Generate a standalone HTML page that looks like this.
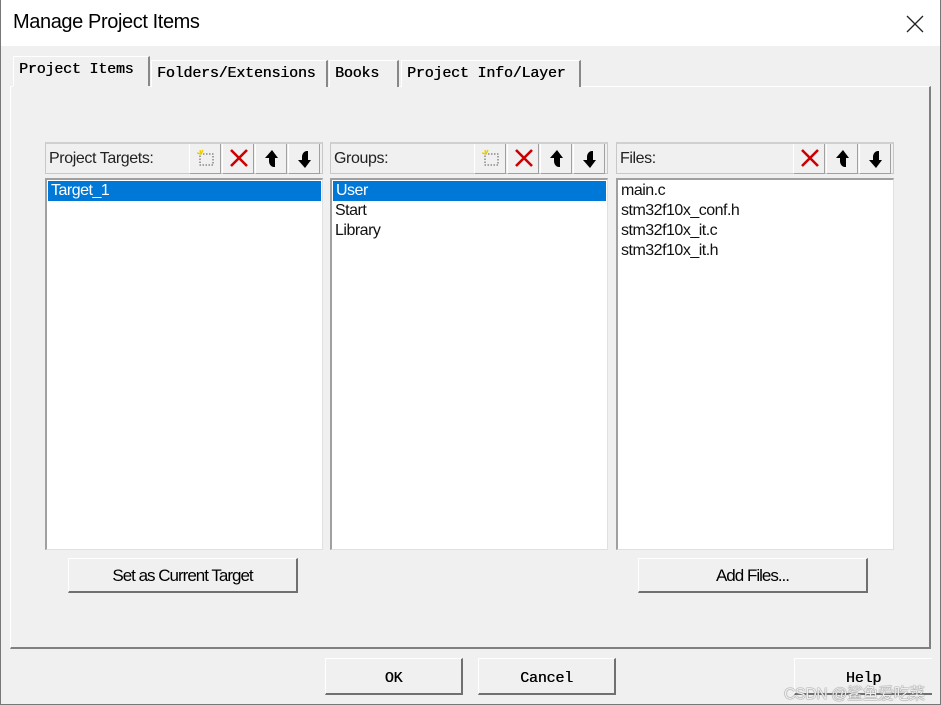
<!DOCTYPE html>
<html><head><style>
*{box-sizing:border-box;margin:0;padding:0}
body{width:941px;height:705px;background:#f0f0f0;position:relative;overflow:hidden;font-family:"Liberation Sans",sans-serif;font-size:15px;color:#000}
.a{position:absolute}
.win{left:0;top:0;width:941px;height:705px;border:1px solid #777;border-top:none}
.title{left:1px;top:0;width:939px;height:46px;background:#fff}
.mono{font-family:"Liberation Mono","DejaVu Sans Mono",monospace;font-weight:normal;font-size:15px;letter-spacing:-0.2px;text-shadow:0.4px 0 0 #000}
.tab{height:27px;border-left:1px solid #fff;border-top:1px solid #fff;border-right:2px solid #888;padding:3px 5px 0;white-space:nowrap;background:#f0f0f0}
.panel{left:10px;top:86px;width:921px;height:563px;border-left:1px solid #fff;border-top:1px solid #fff;border-right:2px solid #808080;border-bottom:2px solid #808080}
.hdr{height:32px;border:1px solid #c8c8c8;border-top:2px solid #d0d0d0;background:#f0f0f0;padding:6px 0 0 3px;font-size:16px;letter-spacing:-0.4px;color:#222}
.list{border-top:2px solid #a0a0a0;border-left:2px solid #a0a0a0;border-right:1px solid #e0e0e0;border-bottom:1px solid #e0e0e0;background:#fff;padding:1px 1px;font-size:16px;letter-spacing:-0.5px;line-height:20px;color:#111}
.sel{background:#0078d7;color:#fff;padding-left:3px}
.it{padding-left:2px}
.ib{width:32px;height:30px;top:0;border-left:1px solid #fff;border-right:1px solid #a0a0a0;border-bottom:1px solid #a0a0a0}
.ib svg{position:absolute;left:7px;top:5px}
.btn{border-top:1px solid #fff;border-left:1px solid #fff;border-right:2px solid #707070;border-bottom:2px solid #707070;background:#f0f0f0;text-align:center;font-size:17px;letter-spacing:-1px}
</style></head><body>
<div class="a win"></div>
<div class="a title"></div>
<div class="a" style="left:13px;top:11px;font-size:20px;letter-spacing:-0.4px">Manage Project Items</div>
<svg class="a" style="left:906px;top:15px" width="18" height="18"><path d="M1 1L17 17M17 1L1 17" stroke="#222" stroke-width="1.3"/></svg>

<div class="a panel"></div>
<div class="a tab" style="left:13px;top:56px;width:137px;height:31px;border-bottom:none"><span class="mono">Project Items</span></div>
<div class="a tab" style="left:151px;top:60px;width:177px"><span class="mono">Folders/Extensions</span></div>
<div class="a tab" style="left:329px;top:60px;width:70px"><span class="mono">Books</span></div>
<div class="a tab" style="left:401px;top:60px;width:180px"><span class="mono">Project Info/Layer</span></div>
<div class="a" style="left:13px;top:86px;width:137px;height:2px;background:#f0f0f0"></div>

<div class="a hdr" style="left:45px;top:142px;width:278px">Project Targets:</div>
<div class="a list" style="left:45px;top:178px;width:278px;height:372px"><div class="sel">Target_1</div></div>
<div class="a hdr" style="left:330px;top:142px;width:278px">Groups:</div>
<div class="a list" style="left:330px;top:178px;width:278px;height:372px"><div class="sel">User</div><div class="it">Start</div><div class="it">Library</div></div>
<div class="a hdr" style="left:616px;top:142px;width:278px">Files:</div>
<div class="a list" style="left:616px;top:178px;width:278px;height:372px"><div class="it">main.c</div><div class="it">stm32f10x_conf.h</div><div class="it">stm32f10x_it.c</div><div class="it">stm32f10x_it.h</div></div>

<div class="a" style="left:189px;top:144px">
 <div class="a ib" style="left:0"><svg width="18" height="18"><rect x="3" y="5" width="13" height="11" fill="none" stroke="#555" stroke-dasharray="1.5 1.5"/><path d="M3 1l1 4M0 4l4 1M6 1L4 5" stroke="#e8d000" stroke-width="1.5"/></svg></div>
 <div class="a ib" style="left:33px"><svg width="20" height="20" style="left:6px;top:4px"><path d="M2 2L18 18M18 2L2 18" stroke="#c00" stroke-width="2.6"/></svg></div>
 <div class="a ib" style="left:66px"><svg width="18" height="20"><path d="M9 1L2 9h4v3c0 3 2 6 5 6h1V9h3z" fill="#000"/></svg></div>
 <div class="a ib" style="left:99px"><svg width="18" height="20"><path d="M9 19L2 11h4V8c0-3 2-6 5-6h1v9h3z" fill="#000"/></svg></div>
</div>
<div class="a" style="left:474px;top:144px">
 <div class="a ib" style="left:0"><svg width="18" height="18"><rect x="3" y="5" width="13" height="11" fill="none" stroke="#555" stroke-dasharray="1.5 1.5"/><path d="M3 1l1 4M0 4l4 1M6 1L4 5" stroke="#e8d000" stroke-width="1.5"/></svg></div>
 <div class="a ib" style="left:33px"><svg width="20" height="20" style="left:6px;top:4px"><path d="M2 2L18 18M18 2L2 18" stroke="#c00" stroke-width="2.6"/></svg></div>
 <div class="a ib" style="left:66px"><svg width="18" height="20"><path d="M9 1L2 9h4v3c0 3 2 6 5 6h1V9h3z" fill="#000"/></svg></div>
 <div class="a ib" style="left:99px"><svg width="18" height="20"><path d="M9 19L2 11h4V8c0-3 2-6 5-6h1v9h3z" fill="#000"/></svg></div>
</div>
<div class="a" style="left:793px;top:144px">
 <div class="a ib" style="left:0"><svg width="20" height="20" style="left:6px;top:4px"><path d="M2 2L18 18M18 2L2 18" stroke="#c00" stroke-width="2.6"/></svg></div>
 <div class="a ib" style="left:33px"><svg width="18" height="20"><path d="M9 1L2 9h4v3c0 3 2 6 5 6h1V9h3z" fill="#000"/></svg></div>
 <div class="a ib" style="left:66px"><svg width="18" height="20"><path d="M9 19L2 11h4V8c0-3 2-6 5-6h1v9h3z" fill="#000"/></svg></div>
</div>

<div class="a btn" style="left:68px;top:558px;width:230px;height:35px;padding-top:7px">Set as Current Target</div>
<div class="a btn" style="left:638px;top:558px;width:230px;height:35px;padding-top:7px">Add Files...</div>

<div class="a btn" style="left:325px;top:658px;width:138px;height:37px;padding-top:8px"><span class="mono">OK</span></div>
<div class="a btn" style="left:478px;top:658px;width:138px;height:37px;padding-top:8px"><span class="mono">Cancel</span></div>
<div class="a btn" style="left:794px;top:658px;width:138px;height:37px;padding-top:8px;border-right:none"><span class="mono">Help</span></div>
<div class="a" style="left:784px;top:680px;font-size:16px;letter-spacing:-0.5px;color:#eee;text-shadow:0 0 1px #777,0 0 1px #777;font-family:'Liberation Sans','Noto Sans CJK SC',sans-serif">CSDN @鲨鱼爱吃菜</div>
</body></html>
